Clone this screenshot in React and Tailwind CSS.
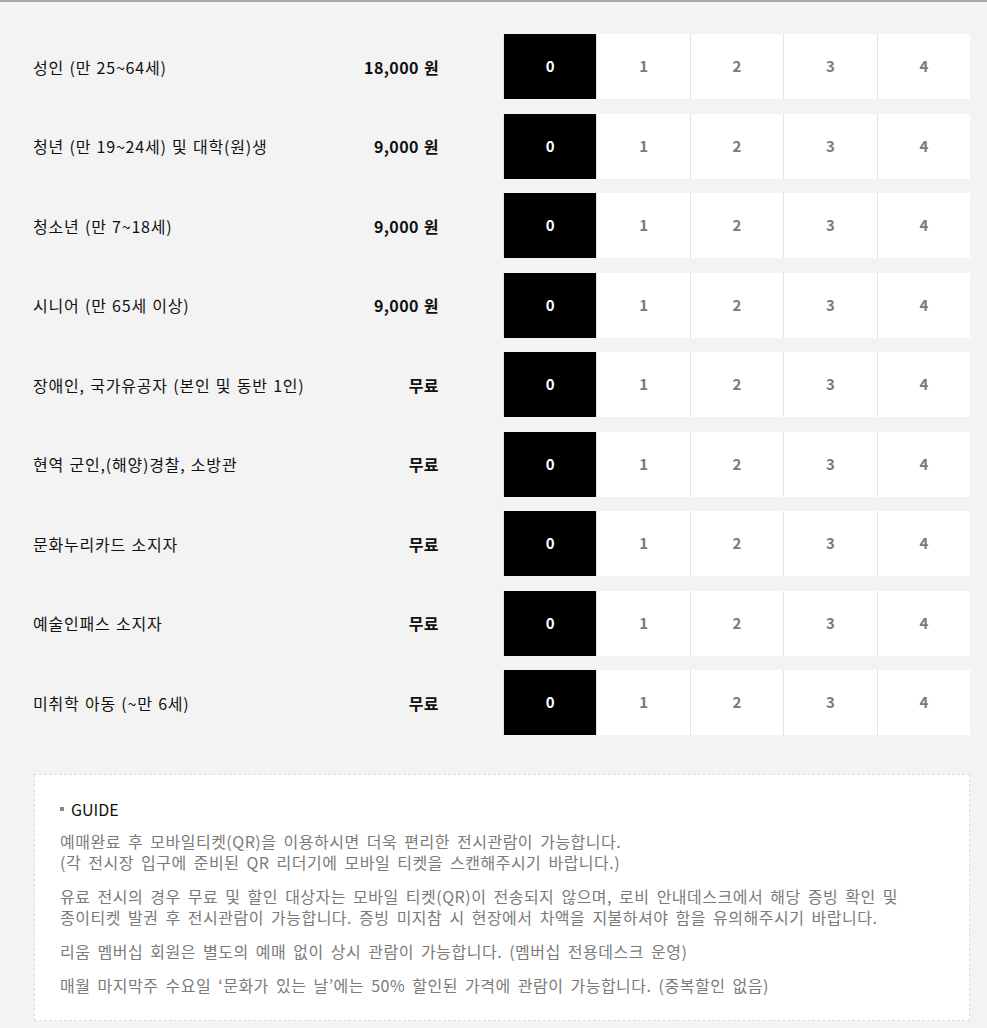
const rows = [
  { label: "성인 (만 25~64세)", price: "18,000 원" },
  { label: "청년 (만 19~24세) 및 대학(원)생", price: "9,000 원" },
  { label: "청소년 (만 7~18세)", price: "9,000 원" },
  { label: "시니어 (만 65세 이상)", price: "9,000 원" },
  { label: "장애인, 국가유공자 (본인 및 동반 1인)", price: "무료" },
  { label: "현역 군인,(해양)경찰, 소방관", price: "무료" },
  { label: "문화누리카드 소지자", price: "무료" },
  { label: "예술인패스 소지자", price: "무료" },
  { label: "미취학 아동 (~만 6세)", price: "무료" },
];

const guide = [
  [
    "예매완료 후 모바일티켓(QR)을 이용하시면 더욱 편리한 전시관람이 가능합니다.",
    "(각 전시장 입구에 준비된 QR 리더기에 모바일 티켓을 스캔해주시기 바랍니다.)",
  ],
  [
    "유료 전시의 경우 무료 및 할인 대상자는 모바일 티켓(QR)이 전송되지 않으며, 로비 안내데스크에서 해당 증빙 확인 및",
    "종이티켓 발권 후 전시관람이 가능합니다. 증빙 미지참 시 현장에서 차액을 지불하셔야 함을 유의해주시기 바랍니다.",
  ],
  ["리움 멤버십 회원은 별도의 예매 없이 상시 관람이 가능합니다. (멤버십 전용데스크 운영)"],
  ["매월 마지막주 수요일 ‘문화가 있는 날’에는 50% 할인된 가격에 관람이 가능합니다. (중복할인 없음)"],
];

function Counter() {
  return (
    <div className="flex w-[467px] h-[65px] shrink-0">
      {[0, 1, 2, 3, 4].map((n) => (
        <button
          key={n}
          className={`flex-1 flex items-center justify-center border-l border-[#e3e3e3] text-[15px] font-bold ${
            n === 0 ? "bg-black text-white border-[#777]" : "bg-white text-[#7a7a7a]"
          }`}
        >
          {n}
        </button>
      ))}
    </div>
  );
}

export default function App() {
  return (
    <div
      className="min-h-[1028px] bg-[#f3f3f3] border-t-2 border-[#a9a9a9]"
      style={{ fontFamily: '"Noto Sans CJK KR", "Noto Sans", sans-serif' }}
    >
      <div className="pt-[32px] pl-[33px] pr-[17px] flex flex-col gap-[14.5px]">
        {rows.map((r) => (
          <div key={r.label} className="flex items-center">
            <div className="flex-1 whitespace-nowrap text-[16px] text-[#111] tracking-[0.8px] [word-spacing:1px]">
              {r.label}
            </div>
            <div className="w-[120px] whitespace-nowrap text-right text-[16px] font-bold text-[#111] tracking-[0.4px] [word-spacing:1px] mr-[64px]">
              {r.price}
            </div>
            <Counter />
          </div>
        ))}
      </div>

      <div className="mt-[39px] ml-[34px] mr-[17px] bg-white border border-dashed border-[#dcdcdc] px-[25px] pt-[22px] pb-[24px]">
        <div className="flex items-center gap-[7px] text-[16px] text-[#111] mb-[10px]">
          <span className="w-[4px] h-[4px] bg-[#888] inline-block"></span>
          GUIDE
        </div>
        <div className="flex flex-col gap-[13px] text-[16px] leading-[21px] text-[#7a7a7a] tracking-[0.5px] [word-spacing:3px]">
          {guide.map((p, i) => (
            <p key={i}>
              {p.map((line, j) => (
                <span key={j} className="block whitespace-nowrap">
                  {line}
                </span>
              ))}
            </p>
          ))}
        </div>
      </div>
    </div>
  );
}
